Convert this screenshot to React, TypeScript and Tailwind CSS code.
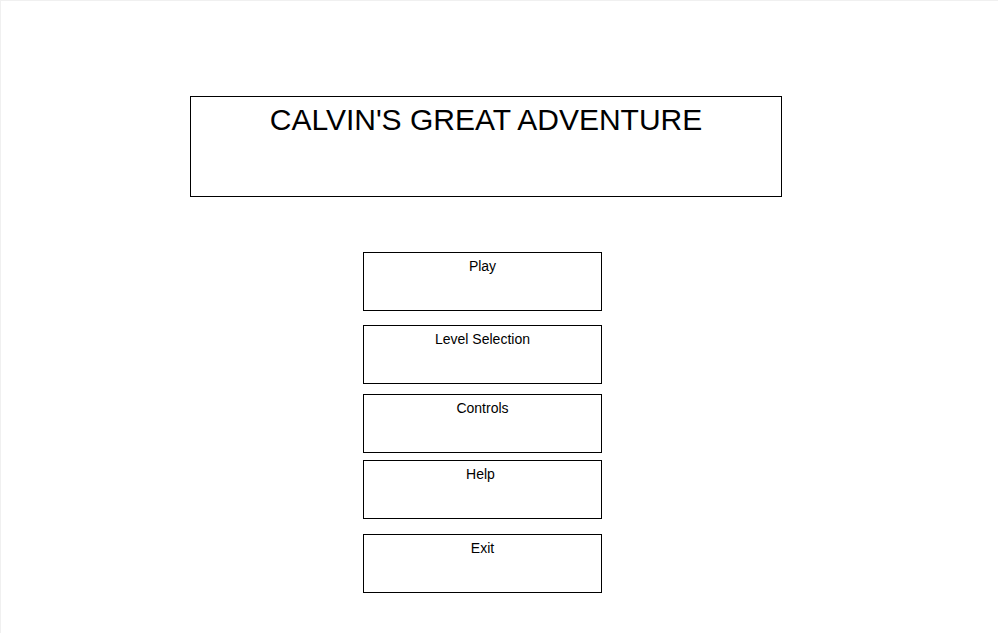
const buttons = [
  { label: 'Play', mt: 'mt-[55px]', pad: '' },
  { label: 'Level Selection', mt: 'mt-[14px]', pad: '' },
  { label: 'Controls', mt: 'mt-[10px]', pad: '' },
  { label: 'Help', mt: 'mt-[7px]', pad: 'pr-[4px]' },
  { label: 'Exit', mt: 'mt-[15px]', pad: '' },
];

export default function App() {
  return (
    <div className="h-[633px] w-[998px] overflow-hidden border-t border-l border-[#f0f0f0] bg-white font-['Liberation_Sans',Arial,sans-serif] text-black">
      <div className="ml-[189px] mt-[95px] flex flex-col">
        <div className="h-[101px] w-[592px] border border-black pt-[8px] text-center text-[30px] leading-none">
          CALVIN'S GREAT ADVENTURE
        </div>
        <div className="ml-[173px] flex flex-col">
          {buttons.map((b) => (
            <div
              key={b.label}
              className={`${b.mt} ${b.pad} h-[59px] w-[239px] border border-black pt-[6px] text-center text-[14px] leading-none`}
            >
              {b.label}
            </div>
          ))}
        </div>
      </div>
    </div>
  );
}
